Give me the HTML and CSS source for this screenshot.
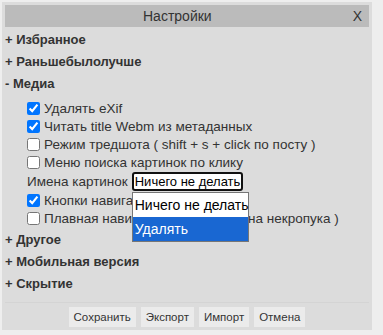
FILE: index.html
```html
<!DOCTYPE html>
<html lang="ru">
<head>
    <meta charset="UTF-8">
    <title>Настройки</title>
    <link rel="stylesheet" href="styles.css">
</head>
<body>
    <div class="panel">
        <div class="title-bar">
            <span class="title">Настройки</span>
            <span class="close">X</span>
        </div>
        <div class="content">
            <div class="section-head">+ Избранное</div>
            <div class="section-head">+ Раньшебылолучше</div>
            <div class="section-head">- Медиа</div>
            <div class="section-body">
                <label class="option"><input type="checkbox" checked> Удалять eXif</label>
                <label class="option"><input type="checkbox" checked> Читать title Webm из метаданных</label>
                <label class="option"><input type="checkbox"> Режим тредшота ( shift + s + click по посту )</label>
                <label class="option"><input type="checkbox"> Меню поиска картинок по клику</label>
                <div class="option select-row">
                    Имена картинок
                    <div class="select-wrap">
                        <span class="select-box">Ничего не делать</span>
                        <div class="select-list">
                            <div class="select-item">Ничего не делать</div>
                            <div class="select-item active">Удалять</div>
                        </div>
                    </div>
                </div>
                <label class="option"><input type="checkbox" checked> Кнопки навигации по медиа</label>
                <label class="option"><input type="checkbox"> Плавная навигация ( без скачка на некропука )</label>
            </div>
            <div class="section-head">+ Другое</div>
            <div class="section-head">+ Мобильная версия</div>
            <div class="section-head">+ Скрытие</div>
        </div>
        <div class="footer">
            <button>Сохранить</button>
            <button>Экспорт</button>
            <button>Импорт</button>
            <button>Отмена</button>
        </div>
    </div>
</body>
</html>
```

FILE: styles.css
```css
body {
    margin: 0;
    background: #eeeeee;
    font-family: "Liberation Sans", Arial, sans-serif;
    color: #333;
}
.panel {
    margin: 2px 0 0 2px;
    width: 370px;
    padding: 3px;
    box-sizing: border-box;
    background: #dcdcdc;
}
.title-bar {
    display: flex;
    height: 22px;
    background: #bbbbbb;
    font-size: 14px;
    line-height: 22px;
}
.title {
    flex: 1;
    text-align: center;
}
.close {
    padding: 0 7px 0 3px;
}
.content {
    padding: 2px 0 7px;
}
.section-head {
    height: 22px;
    line-height: 22px;
    font-size: 13px;
    font-weight: bold;
}
.section-body {
    padding: 4px 0 2px 22px;
}
.option {
    display: flex;
    align-items: center;
    height: 18px;
    font-size: 13.5px;
    white-space: nowrap;
}
.option input {
    margin: 0 4px 0 0;
}
.select-row {
    height: 20px;
}
.select-wrap {
    position: relative;
    margin-left: 4px;
}
.select-box {
    display: block;
    padding: 0 1px;
    border: 2px solid #111;
    border-radius: 3px;
    background: #fff;
    color: #000;
    font-size: 13px;
    line-height: 15px;
}
.select-list {
    position: absolute;
    left: 0;
    top: 20px;
    width: 115px;
    border: 1px solid #767676;
    background: #fff;
    color: #000;
    font-size: 14px;
    white-space: nowrap;
}
.select-item {
    height: 24px;
    line-height: 24px;
    padding-left: 2px;
}
.select-item.active {
    background: #1967d2;
    color: #fff;
}
.footer {
    display: flex;
    justify-content: center;
    gap: 5px;
    border-top: 1px solid #d4d4d4;
    padding-top: 4px;
}
.footer button {
    height: 20px;
    padding: 0 5px;
    border: none;
    background: #ebebeb;
    color: #333;
    font-family: "Liberation Sans", Arial, sans-serif;
    font-size: 11.5px;
}
```
